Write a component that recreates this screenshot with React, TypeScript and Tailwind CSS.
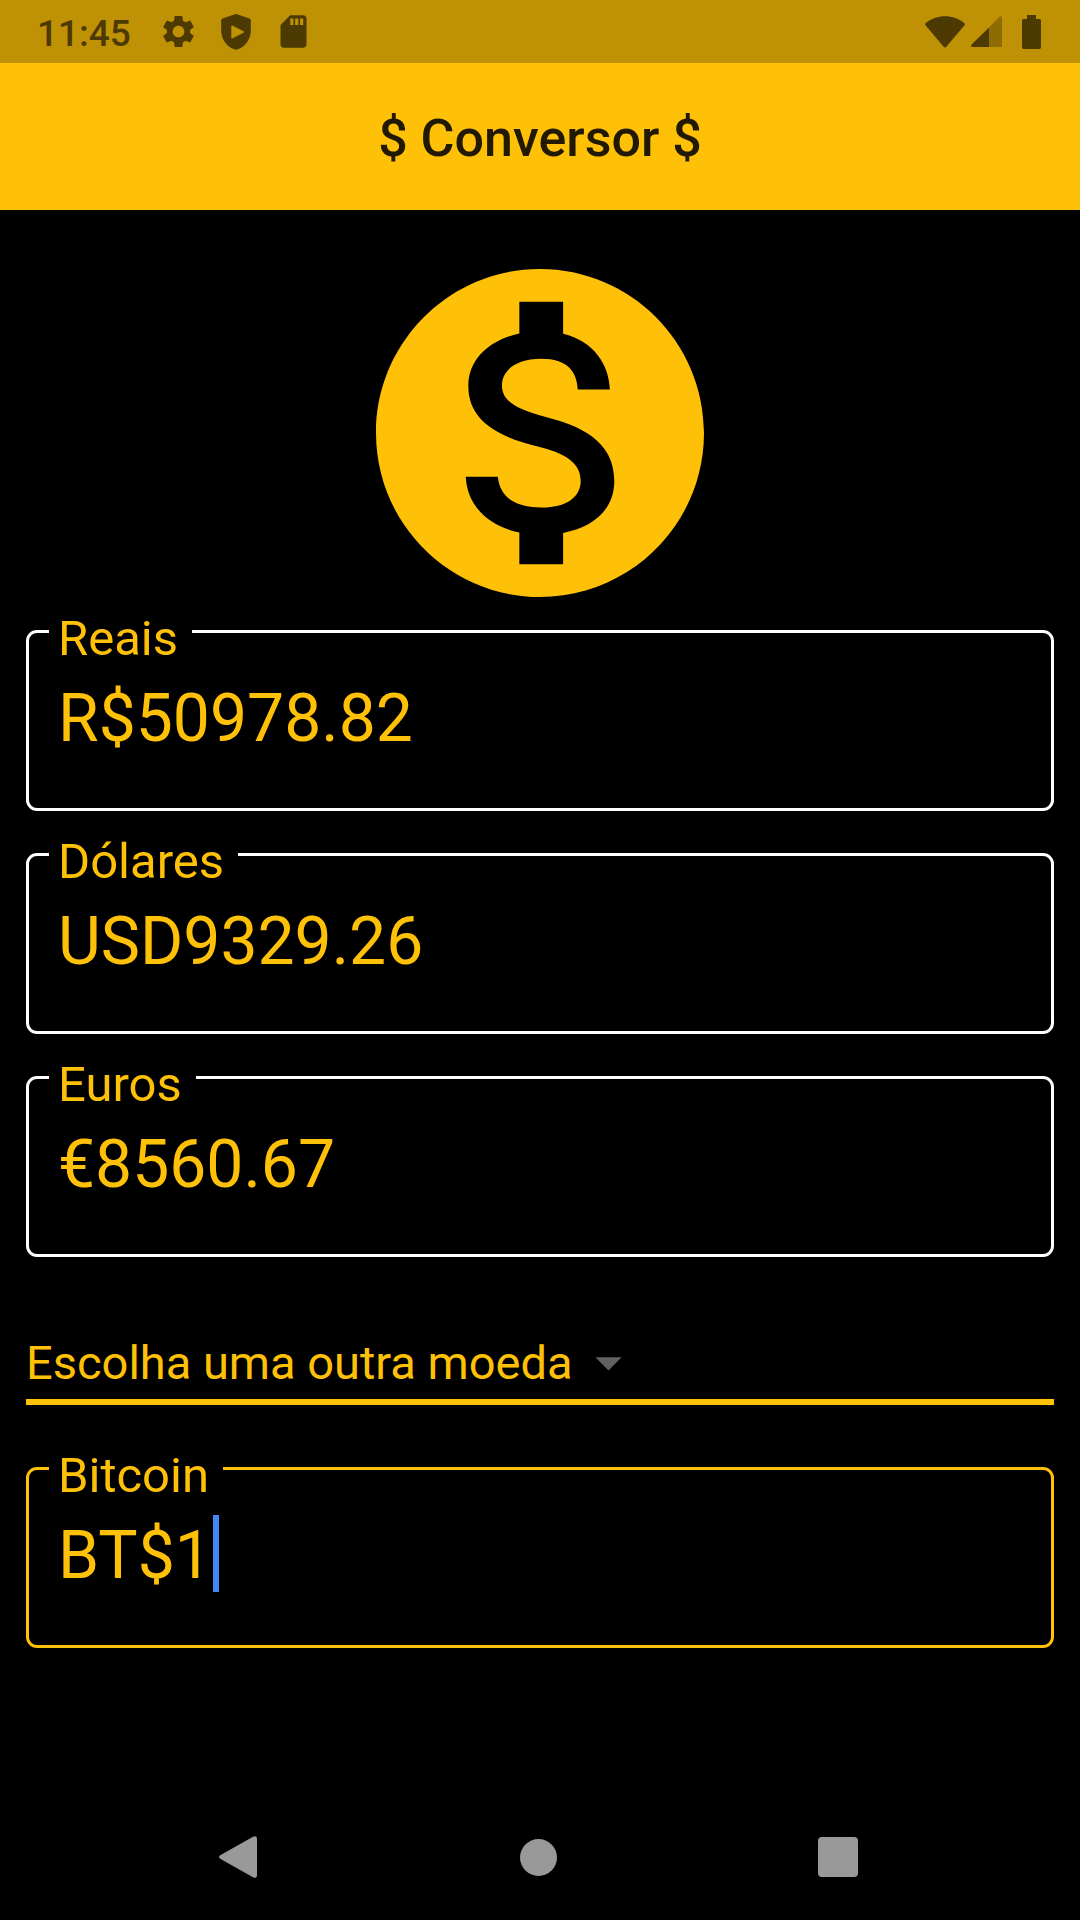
import { useState } from "react";
import { MdArrowDropDown, MdSettings } from "react-icons/md";

function SdCardIcon() {
  return (
    <svg viewBox="0 0 24 24" className="size-[39px]" aria-hidden="true">
      <path
        fill="currentColor"
        d="M18 2h-8L4.020 8 4 20c0 1.100.9 2 2 2h12c1.100 0 2-.9 2-2V4c0-1.100-.9-2-2-2zm-6 6h-2V4h2v4zm3 0h-2V4h2v4zm3 0h-2V4h2v4z"
      />
    </svg>
  );
}

function ShieldPlayIcon() {
  return (
    <svg viewBox="0 0 30 36" className="h-9 w-[30px]" aria-hidden="true">
      <path
        fill="currentColor"
        fillRule="evenodd"
        d="M14 .2Q15 -.2 16 .2L28.4 4.6Q29.8 5.2 29.8 6.8V16.500C29.800 25.600 23.600 33.400 16 35.600Q15 35.900 14 35.600C6.400 33.400 .2 25.600 .2 16.500V6.800Q.2 5.200 1.600 4.600ZM10.300 12.200V23.800Q10.400 24.800 11.300 24.400L22.900 18.600Q23.700 18 22.900 17.400L11.300 11.500Q10.400 11.200 10.300 12.200Z"
      />
    </svg>
  );
}

function WifiIcon() {
  return (
    <svg viewBox="0 0 40 32" className="h-8 w-10" aria-hidden="true">
      <path
        fill="currentColor"
        d="M.6 7.200C11.500 -2 28.500 -2 39.400 7.200Q40.300 8.200 39.500 9.200L21.300 30.800Q20 32 18.700 30.800L.5 9.200Q-.3 8.200 .6 7.200Z"
      />
    </svg>
  );
}

function SignalIcon() {
  return (
    <svg viewBox="0 0 31 31" className="h-[31px] w-[31px]" aria-hidden="true">
      <path fill="currentColor" fillOpacity="0.42" d="M18 11.500L28.600 .8Q31 -.6 31 2V31H18Z" />
      <path fill="currentColor" d="M18 11.500V31H1.500Q-.8 30.500 .6 28.600Z" />
    </svg>
  );
}

function BatteryIcon() {
  return (
    <svg viewBox="0 0 19 34" className="h-[34px] w-[19px]" aria-hidden="true">
      <path
        fill="currentColor"
        d="M5 0H14V4H17.500Q19 4 19 5.500V32Q19 34 17.500 34H1.500Q0 34 0 32V5.500Q0 4 1.500 4H5Z"
      />
    </svg>
  );
}

function CoinIcon() {
  return (
    <svg viewBox="2 2 20 20" className="mx-auto block size-[328px]" aria-hidden="true">
      <path
        fill="currentColor"
        d="M12 2C6.480 2 2 6.480 2 12s4.480 10 10 10 10-4.480 10-10S17.520 2 12 2zm1.410 16.090V20h-2.670v-1.930c-1.710-.36-3.160-1.460-3.270-3.400h1.960c.1 1.050.82 1.870 2.650 1.870 1.960 0 2.400-.98 2.400-1.590 0-.83-.44-1.610-2.670-2.140-2.480-.6-4.180-1.620-4.180-3.670 0-1.720 1.390-2.840 3.110-3.210V4h2.670v1.950c1.860.45 2.790 1.860 2.850 3.390H14.300c-.05-1.110-.64-1.870-2.220-1.870-1.500 0-2.400.68-2.400 1.640 0 .84.65 1.390 2.670 1.910s4.180 1.390 4.180 3.910c-.01 1.830-1.380 2.830-3.120 3.160z"
      />
    </svg>
  );
}

type FieldProps = { id: string; label: string; initial: string; active?: boolean };

function MoneyField({ id, label, initial, active = false }: FieldProps) {
  const [value, setValue] = useState(initial);
  return (
    <fieldset
      className={`min-w-0 rounded-[11px] border-[3px] px-5 pb-12 ${active ? "border-[#ffc107]" : "border-white"}`}
    >
      <legend className="pt-4 pr-[14px] pl-[9px] text-[49px] leading-4">
        <label htmlFor={id}>{label}</label>
      </legend>
      <div className="flex items-start pt-[31px] pl-[9px]">
        <input
          id={id}
          inputMode="decimal"
          value={value}
          onChange={(e) => setValue(e.target.value)}
          className={`h-[82px] bg-transparent text-[66px] leading-[82px] outline-none ${active ? "field-sizing-content" : "w-full"}`}
        />
        {active && <span className="ml-px h-[77px] w-[6px] bg-[#4285f4]" />}
      </div>
    </fieldset>
  );
}

export default function App() {
  return (
    <div className="flex min-h-screen flex-col bg-black font-['Roboto',sans-serif] text-[#ffc107]">
      <div className="flex h-[63px] items-center justify-between bg-[#bf9105] pr-[39px] pl-[37px] text-[#4c3a02]">
        <div className="flex items-center">
          <span className="pt-1 text-[37px] leading-[44px] font-medium">11:45</span>
          <MdSettings className="ml-7 size-[39px]" />
          <span className="mx-[23px]">
            <ShieldPlayIcon />
          </span>
          <SdCardIcon />
        </div>
        <div className="flex items-center">
          <WifiIcon />
          <span className="mr-5 ml-[6px]">
            <SignalIcon />
          </span>
          <BatteryIcon />
        </div>
      </div>

      <header className="flex h-[147px] items-center justify-center bg-[#ffc107] pt-1">
        <h1 className="text-[52px] leading-[60px] font-medium text-[#211901]">$ Conversor $</h1>
      </header>

      <main className="flex-1 px-[26px] pt-[59px]">
        <CoinIcon />
        <div className="mt-[18px] flex flex-col gap-[27px]">
          <MoneyField id="reais" label="Reais" initial="R$50978.82" />
          <MoneyField id="dolares" label="Dólares" initial="USD9329.26" />
          <MoneyField id="euros" label="Euros" initial="€8560.67" />
        </div>

        <div className="mt-[74px] mb-[47px] flex items-center border-b-[6px] border-[#ffc107] pb-[5px]">
          <select
            aria-label="Escolha uma outra moeda"
            defaultValue=""
            className="h-[63px] appearance-none bg-transparent text-[47px] leading-[56px] outline-none"
          >
            <option value="">Escolha uma outra moeda</option>
            <option value="btc">Bitcoin</option>
          </select>
          <MdArrowDropDown className="pointer-events-none ml-1 size-[63px] text-[#616161]" />
        </div>

        <MoneyField id="bitcoin" label="Bitcoin" initial="BT$1" active />
      </main>

      <nav className="flex h-[126px] items-center justify-between pr-[222px] pl-[219px] text-[#999999]">
        <button type="button" aria-label="Voltar" className="w-10">
          <svg viewBox="0 0 38 42" className="h-[42px] w-[38px]" aria-hidden="true">
            <path
              fill="currentColor"
              d="M1.200 19.300L34 .7Q38 -1 38 3V39Q38 43 34 41.300L1.200 22.700Q-1 21 1.200 19.300Z"
            />
          </svg>
        </button>
        <button type="button" aria-label="Início" className="size-[37px] rounded-full bg-[#999999]" />
        <button type="button" aria-label="Recentes" className="size-10 rounded bg-[#999999]" />
      </nav>
    </div>
  );
}
